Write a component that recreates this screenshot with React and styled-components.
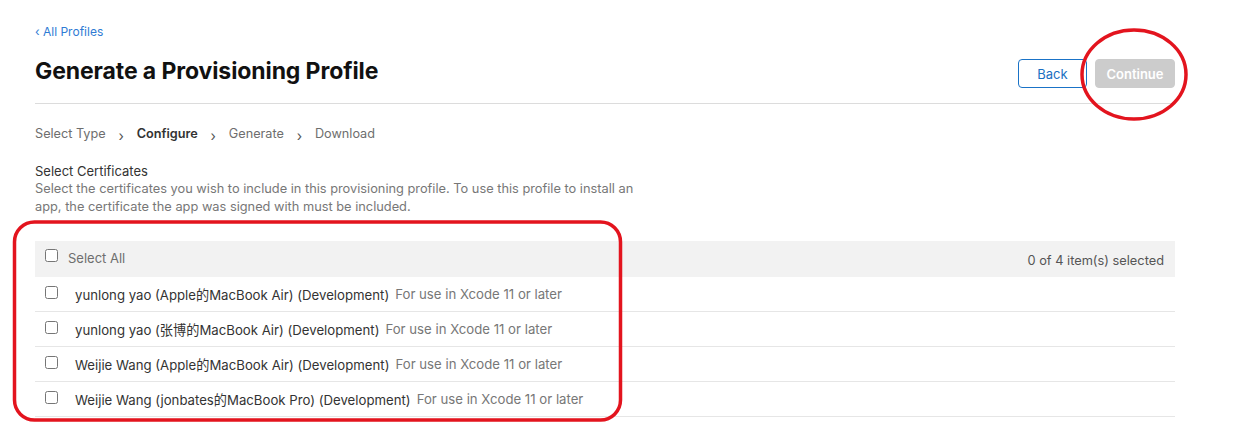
import styled, { createGlobalStyle } from 'styled-components';

const certs = [
  { name: 'yunlong yao (Apple的MacBook Air) (Development)', note: 'For use in Xcode 11 or later' },
  { name: 'yunlong yao (张博的MacBook Air) (Development)', note: 'For use in Xcode 11 or later' },
  { name: 'Weijie Wang (Apple的MacBook Air) (Development)', note: 'For use in Xcode 11 or later' },
  { name: 'Weijie Wang (jonbates的MacBook Pro) (Development)', note: 'For use in Xcode 11 or later' },
];

const steps = [
  { label: 'Select Type' },
  { label: 'Configure', active: true },
  { label: 'Generate' },
  { label: 'Download' },
];

const App = () => {
  return (
    <Page>
      <GlobalStyle />
      <BackLink>‹ All Profiles</BackLink>
      <Header>
        <Title>Generate a Provisioning Profile</Title>
        <Actions>
          <Button>Back</Button>
          <Button primary disabled>
            Continue
          </Button>
        </Actions>
      </Header>
      <Steps>
        {steps.map((s, i) => (
          <Step key={s.label} active={s.active}>
            {i > 0 && <Chevron>›</Chevron>}
            {s.label}
          </Step>
        ))}
      </Steps>
      <SectionTitle>Select Certificates</SectionTitle>
      <Description>
        Select the certificates you wish to include in this provisioning profile. To use this profile to install an
        app, the certificate the app was signed with must be included.
      </Description>
      <Table>
        <HeadRow>
          <HeadLabel>
            <Check type="checkbox" tight />
            <span>Select All</span>
          </HeadLabel>
          <Count>0 of 4 item(s) selected</Count>
        </HeadRow>
        {certs.map((c) => (
          <Row key={c.name}>
            <Check type="checkbox" />
            <CertName>{c.name}</CertName>
            <CertNote>{c.note}</CertNote>
          </Row>
        ))}
      </Table>

      <Marks width="1253" height="445" viewBox="0 0 1253 445">
        <ellipse cx="1134" cy="74.5" rx="52" ry="44.5" fill="none" stroke="#e3141e" strokeWidth="3.5" />
        <rect x="14.5" y="222" width="606" height="198" rx="20" fill="none" stroke="#e3141e" strokeWidth="3.5" />
      </Marks>
    </Page>
  );
};

export default App;

const GlobalStyle = createGlobalStyle`
  body {
    margin: 0;
    background: #ffffff;
    font-family: Inter, "Noto Sans CJK SC", sans-serif;
    color: #333333;
    overflow: hidden;
  }
`;

const Page = styled.div`
  position: relative;
  width: 1140px;
  height: 421px;
  padding: 24px 0 0 35px;
  box-sizing: content-box;
`;

const BackLink = styled.a`
  display: block;
  font-size: 12px;
  line-height: 16px;
  color: #2f7bd4;
  cursor: pointer;
`;

const Header = styled.div`
  display: flex;
  align-items: center;
  justify-content: space-between;
  height: 64px;
  border-bottom: 1px solid #dcdcdc;
  box-sizing: border-box;
`;

const Title = styled.h1`
  margin: 0;
  margin-top: -2px;
  font-size: 23px;
  font-weight: 700;
  color: #111111;
  letter-spacing: -0.1px;
`;

const Actions = styled.div`
  display: flex;
  gap: 8px;
  margin-top: 4px;
`;

const Button = styled.button`
  height: 29px;
  width: ${(p) => (p.primary ? '80px' : '69px')};
  padding: 0;
  font-family: Inter, sans-serif;
  font-size: 13px;
  font-weight: ${(p) => (p.primary ? 600 : 400)};
  border-radius: 4px;
  border: 1px solid ${(p) => (p.primary ? '#cccccc' : '#1a73c7')};
  background: ${(p) => (p.primary ? '#cccccc' : '#ffffff')};
  color: ${(p) => (p.primary ? '#ffffff' : '#1a6fc2')};
  cursor: pointer;
`;

const Steps = styled.div`
  display: flex;
  align-items: center;
  margin-top: 22px;
  font-size: 12.7px;
  line-height: 16px;
`;

const Step = styled.span`
  display: flex;
  align-items: center;
  color: ${(p) => (p.active ? '#333333' : '#6e6e6e')};
  font-weight: ${(p) => (p.active ? 600 : 400)};
`;

const Chevron = styled.span`
  display: inline-block;
  width: 31px;
  text-align: center;
  font-size: 14px;
  font-weight: 400;
  color: #555555;
  transform: translateY(2px);
`;

const SectionTitle = styled.div`
  margin-top: 21px;
  font-size: 13px;
  line-height: 16px;
  color: #333333;
`;

const Description = styled.p`
  margin: 1px 0 0;
  width: 605px;
  font-size: 12.8px;
  line-height: 18px;
  color: #777777;
`;

const Table = styled.div`
  margin-top: 25px;
`;

const HeadRow = styled.div`
  display: flex;
  align-items: center;
  justify-content: space-between;
  height: 36px;
  padding: 0 11px 0 10px;
  background: #f2f2f2;
  font-size: 13px;
  color: #6e6e6e;
`;

const HeadLabel = styled.label`
  display: flex;
  align-items: center;
  margin-top: -3px;
`;

const Count = styled.span`
  color: #555555;
  font-size: 12.8px;
  margin-top: 3px;
`;

const Row = styled.div`
  display: flex;
  align-items: center;
  height: 35px;
  padding: 0 10px;
  border-bottom: 1px solid #e6e6e6;
  font-size: 13.2px;
  box-sizing: border-box;
`;

const Check = styled.input`
  width: 13px;
  height: 13px;
  margin: 0 ${(p) => (p.tight ? 10 : 17)}px 0 0;
  accent-color: #1a73c7;
  transform: translateY(-2px);
`;

const CertName = styled.span`
  color: #333333;
  margin-right: 6px;
`;

const CertNote = styled.span`
  color: #777777;
`;

const Marks = styled.svg`
  position: absolute;
  left: 0;
  top: 0;
  pointer-events: none;
`;
